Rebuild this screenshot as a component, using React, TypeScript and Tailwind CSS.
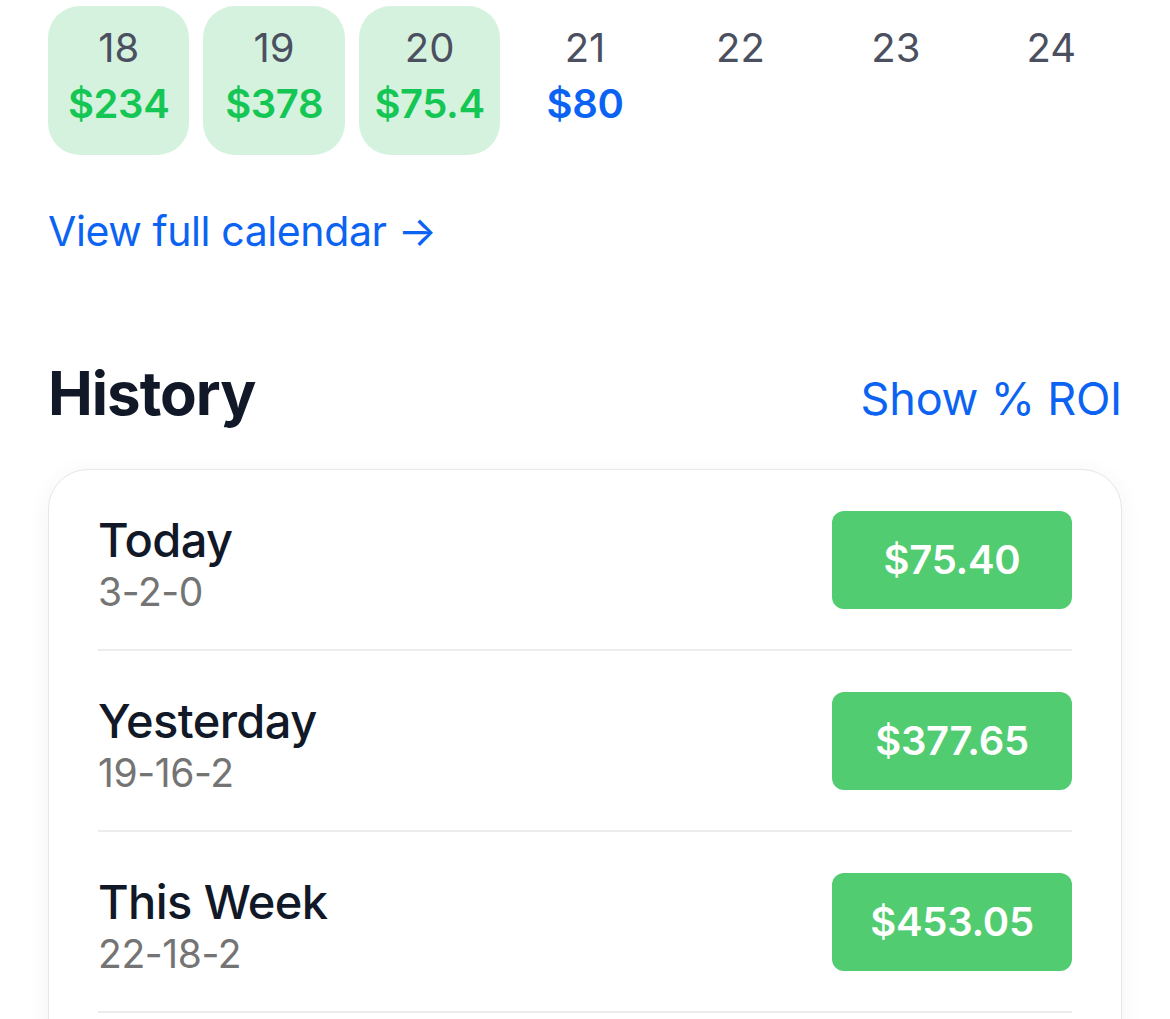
import React from "react";

type Day = { day: number; amount?: string; done?: boolean };

const days: Day[] = [
  { day: 18, amount: "$234", done: true },
  { day: 19, amount: "$378", done: true },
  { day: 20, amount: "$75.4", done: true },
  { day: 21, amount: "$80" },
  { day: 22 },
  { day: 23 },
  { day: 24 },
];

const history = [
  { label: "Today", record: "3-2-0", total: "$75.40" },
  { label: "Yesterday", record: "19-16-2", total: "$377.65" },
  { label: "This Week", record: "22-18-2", total: "$453.05" },
];

function DayCell({ d }: { d: Day }) {
  return (
    <div
      className={
        "flex h-[149px] flex-col items-center rounded-[32px] pt-[18px] " +
        (d.done ? "bg-[#d5f2df]" : "")
      }
    >
      <span className="text-[40px] leading-[48px] text-[#4b5060]">{d.day}</span>
      {d.amount && (
        <span
          className={
            "mt-[8px] text-[40px] font-semibold leading-[48px] tracking-[-0.4px] " +
            (d.done ? "text-[#14c653]" : "text-[#0b63f3]")
          }
        >
          {d.amount}
        </span>
      )}
    </div>
  );
}

export default function App() {
  return (
    <div
      className="h-[1019px] overflow-hidden bg-white px-[48px] pt-[6px]"
      style={{ fontFamily: "Inter, 'Noto Sans', sans-serif" }}
    >
      <div className="grid grid-cols-7 gap-[14px]">
        {days.map((d) => (
          <DayCell key={d.day} d={d} />
        ))}
      </div>

      <a className="mt-[52px] block text-[41px] leading-[48px] tracking-[-0.4px] text-[#0b63f3]">
        View full calendar →
      </a>

      <div className="mt-[102px] flex items-baseline justify-between">
        <h2 className="text-[60px] font-bold leading-[72px] tracking-[-1px] text-[#111827]">
          History
        </h2>
        <button className="text-[45px] leading-[54px] tracking-[-0.2px] text-[#0b63f3]">
          Show % ROI
        </button>
      </div>

      <div className="mt-[40px] h-[700px] rounded-[40px] border border-[#e7e7ea] bg-white px-[49px] shadow-[0_4px_24px_rgba(0,0,0,0.05)]">
        {history.map((h) => (
          <div
            key={h.label}
            className="flex h-[181px] items-center justify-between border-b-2 border-[#ececee]"
          >
            <div className="flex flex-col pt-[12px]">
              <span className="text-[47px] font-medium leading-[52px] tracking-[-0.6px] text-[#111827]">
                {h.label}
              </span>
              <span className="text-[39px] leading-[52px] tracking-[-0.4px] text-[#747474]">
                {h.record}
              </span>
            </div>
            <div className="flex h-[98px] w-[240px] items-center justify-center rounded-[12px] bg-[#52cc71] text-[40px] font-semibold tracking-[-0.3px] text-white">
              {h.total}
            </div>
          </div>
        ))}
      </div>
    </div>
  );
}
